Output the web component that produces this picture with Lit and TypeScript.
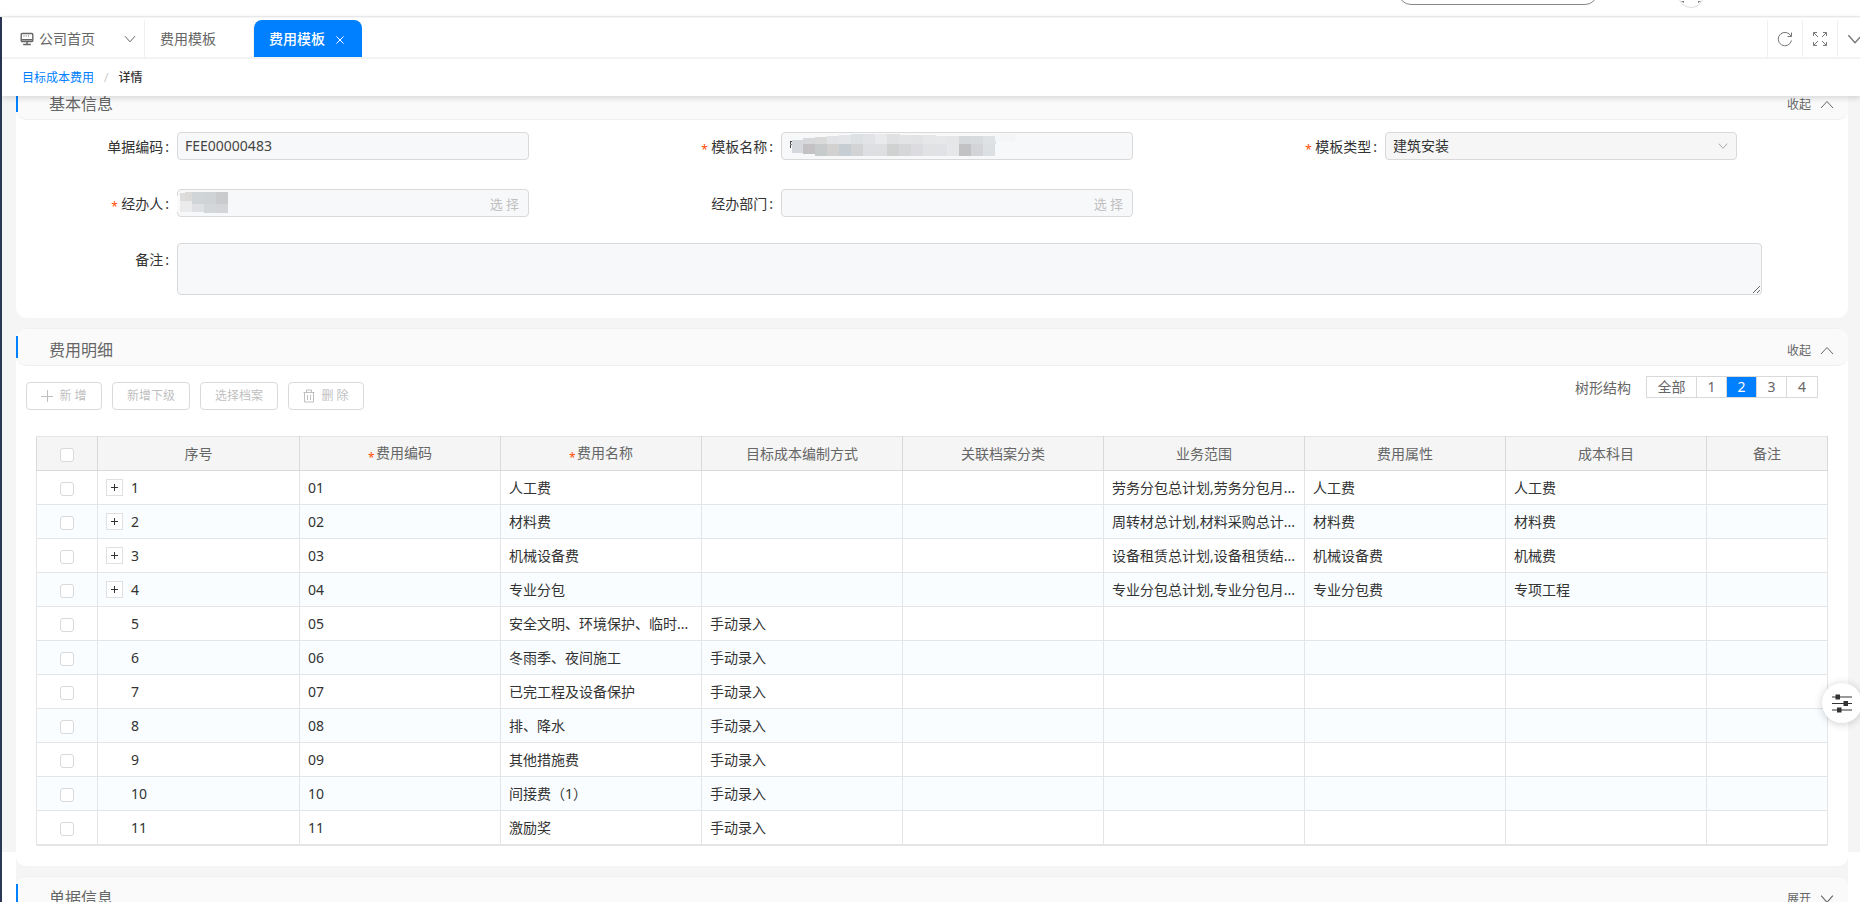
import { LitElement, html, svg, css, nothing } from "lit";
import { customElement, property, state } from "lit/decorators.js";
import { classMap } from "lit/directives/class-map.js";

const chevronDown = (size = 12) => html`<svg width=${size} height=${size} viewBox="0 0 12 12" fill="none" stroke="currentColor" stroke-width="1" aria-hidden="true"><path d="M1 3.2 6 8.8 11 3.2" /></svg>`;
const chevronUp = (size = 14) => html`<svg width=${size} height=${size} viewBox="0 0 14 14" fill="none" stroke="currentColor" stroke-width="1" aria-hidden="true"><path d="M1 10 7 3.5 13 10" /></svg>`;

interface Tile { x: number; y: number; w: number; h: number; c: string }

const personTiles: Tile[] = [
  { x: 0, y: 7, w: 3, h: 16, c: "#fafafa" },
  { x: 3, y: 4, w: 6, h: 8, c: "#dfdddc" }, { x: 8, y: 3, w: 7, h: 9, c: "#dcdad9" },
  { x: 15, y: 3, w: 12, h: 12, c: "#d0d5d7" }, { x: 27, y: 3, w: 12, h: 12, c: "#cfd3d5" }, { x: 39, y: 3, w: 12, h: 12, c: "#c9cbcd" },
  { x: 3, y: 12, w: 12, h: 11, c: "#ebebeb" }, { x: 15, y: 15, w: 12, h: 8, c: "#dfe0e4" },
  { x: 27, y: 15, w: 12, h: 9, c: "#d3d7da" }, { x: 39, y: 15, w: 12, h: 9, c: "#d4d5d8" },
];

const upper = ["#d6d8da", "#dadada", "#e1e3e6", "#e4e5e8", "#dee1e4", "#e1e3e6", "#e9eaec", "#e0e1e3", "#e3e4e6", "#e2e3e4", "#e6e7e9", "#e7e8ea", "#e5e6e8", "#d5d9dc", "#d8dbdd", "#dee2e5"];
const lower = ["#c3c1c3", "#c8cbcb", "#d3d1cf", "#c6cdd3", "#d2d3d5", "#dddfe2", "#dedfe1", "#d0d2d2", "#d5d7d9", "#dcdce0", "#e1e2e4", "#e1e2e5", "#e6e7e9", "#c2c1c3", "#d2d4d7", "#dde0e3"];
const topEdge = [6, 5, 4, 3, 2, 2, 2, 2, 3, 3, 3, 4, 4, 4, 4, 4];
const nameTiles: Tile[] = [
  { x: 9, y: 9, w: 1, h: 7, c: "#4a4450" }, { x: 9, y: 9, w: 3, h: 1, c: "#4a4450" }, { x: 9, y: 12, w: 3, h: 1, c: "#8a8088" },
  { x: 11, y: 8, w: 12, h: 13, c: "#d5d8dc" },
  ...upper.map((c, i) => ({ x: 22 + i * 12, y: topEdge[i], w: 13, h: 12 - topEdge[i], c })),
  ...lower.map((c, i) => ({ x: 22 + i * 12, y: 12, w: i === 15 ? 12 : 13, h: i === 0 ? 10 : 12, c })),
  { x: 178, y: 4, w: 12, h: 8, c: "#d5d9dc" },
  { x: 214, y: 3, w: 20, h: 5, c: "#f4f5f6" }, { x: 214, y: 8, w: 26, h: 1, c: "#f4f5f6" },
];

@customElement("redacted-value")
class RedactedValue extends LitElement {
  @property({ attribute: false }) tiles: Tile[] = [];
  static styles = css`
    :host { display: block; position: absolute; left: 0; top: 0; pointer-events: none; }
    svg { display: block; }
  `;
  render() {
    return html`<svg width="244" height="28" shape-rendering="crispEdges" aria-hidden="true">
      ${this.tiles.map((t) => svg`<rect x=${t.x} y=${t.y} width=${t.w} height=${t.h} fill=${t.c}></rect>`)}
    </svg>`;
  }
}

@customElement("panel-card")
class PanelCard extends LitElement {
  @property() heading = "";
  @property({ type: Boolean }) collapsed = false;
  static styles = css`
    :host { display: block; background: #fff; border-radius: 10px; color: #666; }
    .head { display: flex; align-items: flex-start; height: 36px; background: #fafafa; border-top: 1px solid #f1f1f1; border-bottom: 1px solid #efefef; border-radius: 10px; }
    .bar { width: 2px; height: 22px; margin-top: 7px; background: #0080ff; }
    h2 { flex: 1; margin: 0; padding: 9px 0 0 31px; font-size: 16px; font-weight: 400; line-height: 24px; }
    button { display: flex; align-items: center; gap: 9px; margin: 12px 14px 0 0; padding: 0; border: 0; background: none; font: inherit; font-size: 12px; line-height: 20px; color: #666; }
    svg { display: block; }
  `;
  render() {
    return html`
      <div class="head">
        <span class="bar"></span>
        <h2>${this.heading}</h2>
        <button type="button" aria-expanded=${this.collapsed ? "false" : "true"} @click=${() => (this.collapsed = !this.collapsed)}>
          ${this.collapsed ? "展开" : "收起"} ${this.collapsed ? chevronDown(14) : chevronUp(14)}
        </button>
      </div>
      ${this.collapsed ? nothing : html`<slot></slot>`}
    `;
  }
}

interface Row { no: string; code: string; name: string; mode?: string; scope?: string; attr?: string; subject?: string; parent?: boolean }

const rows: Row[] = [
  { no: "1", code: "01", name: "人工费", scope: "劳务分包总计划,劳务分包月...", attr: "人工费", subject: "人工费", parent: true },
  { no: "2", code: "02", name: "材料费", scope: "周转材总计划,材料采购总计...", attr: "材料费", subject: "材料费", parent: true },
  { no: "3", code: "03", name: "机械设备费", scope: "设备租赁总计划,设备租赁结...", attr: "机械设备费", subject: "机械费", parent: true },
  { no: "4", code: "04", name: "专业分包", scope: "专业分包总计划,专业分包月...", attr: "专业分包费", subject: "专项工程", parent: true },
  { no: "5", code: "05", name: "安全文明、环境保护、临时...", mode: "手动录入" },
  { no: "6", code: "06", name: "冬雨季、夜间施工", mode: "手动录入" },
  { no: "7", code: "07", name: "已完工程及设备保护", mode: "手动录入" },
  { no: "8", code: "08", name: "排、降水", mode: "手动录入" },
  { no: "9", code: "09", name: "其他措施费", mode: "手动录入" },
  { no: "10", code: "10", name: "间接费（1）", mode: "手动录入" },
  { no: "11", code: "11", name: "激励奖", mode: "手动录入" },
];

const columns: { title: string; required?: boolean }[] = [
  { title: "序号" }, { title: "费用编码", required: true }, { title: "费用名称", required: true },
  { title: "目标成本编制方式" }, { title: "关联档案分类" }, { title: "业务范围" },
  { title: "费用属性" }, { title: "成本科目" }, { title: "备注" },
];

@customElement("fee-table")
class FeeTable extends LitElement {
  static styles = css`
    :host { display: block; border-bottom: 1px solid #e5e5e5; }
    table { width: 100%; table-layout: fixed; border-collapse: collapse; font-size: 14px; line-height: 20px; color: #333; }
    .c-check { width: 61px; }
    .c-no { width: 202px; }
    .c-note { width: 121px; }
    th, td { height: 33px; padding: 0 8px; border: 1px solid #e5e5e5; overflow: hidden; white-space: nowrap; text-align: left; font-weight: 400; box-sizing: content-box; }
    th { background: #f5f5f5; border-color: #e5e5e5 #d9d9d9 #d9d9d9; text-align: center; color: #666; }
    tbody tr:nth-child(even) { background: #f9fdff; }
    .pick { padding: 0; text-align: center; }
    input { appearance: none; display: block; width: 14px; height: 14px; margin: 2px auto 0; border: 1px solid #d9d9d9; border-radius: 3px; background: #fff; }
    input:checked { background: #0080ff; border-color: #0080ff; }
    .star { display: inline-block; width: 8px; color: #ff4d00; font-size: 12px; line-height: 12px; vertical-align: -4px; text-align: left; }
    .tree { display: flex; align-items: center; gap: 8px; }
    .toggle, .indent { width: 17px; height: 17px; box-sizing: border-box; }
    .toggle { display: flex; align-items: center; justify-content: center; padding: 0; border: 1px solid #e0e0e0; background: #fff; color: #333; }
  `;
  render() {
    return html`<table>
      <colgroup>
        <col class="c-check" /><col class="c-no" /><col /><col /><col /><col /><col /><col /><col /><col class="c-note" />
      </colgroup>
      <thead>
        <tr>
          <th class="pick"><input type="checkbox" aria-label="全部" /></th>
          ${columns.map((c) => html`<th>${c.required ? html`<span class="star">*</span>` : nothing}${c.title}</th>`)}
        </tr>
      </thead>
      <tbody>
        ${rows.map((r) => html`<tr>
          <td class="pick"><input type="checkbox" aria-label=${r.name} /></td>
          <td><div class="tree">${r.parent
            ? html`<button class="toggle" type="button" aria-label="展开"><svg width="9" height="9" viewBox="0 0 9 9" stroke="currentColor" stroke-width="1"><path d="M1 4.5H8M4.5 1V8" /></svg></button>`
            : html`<span class="indent"></span>`}${r.no}</div></td>
          <td>${r.code}</td><td>${r.name}</td><td>${r.mode ?? nothing}</td><td></td>
          <td>${r.scope ?? nothing}</td><td>${r.attr ?? nothing}</td><td>${r.subject ?? nothing}</td><td></td>
        </tr>`)}
      </tbody>
    </table>`;
  }
}

@customElement("app-root")
class AppRoot extends LitElement {
  @state() private level = "2";

  static styles = css`
    :host { display: block; position: relative; height: 100vh; overflow: hidden; background: #fff; color: #333; font-family: "Noto Sans", "Noto Sans CJK SC", sans-serif; font-size: 14px; line-height: 20px; }
    svg { display: block; flex: none; }
    button { font: inherit; }
    .top { display: flex; justify-content: flex-end; align-items: flex-start; gap: 80px; height: 17px; padding-right: 156px; box-sizing: border-box; border-bottom: 1px solid #f0f0f0; overflow: hidden; }
    .search { width: 200px; height: 30px; margin-top: -25px; box-sizing: border-box; border: 1px solid #888; border-radius: 13px; background: #fff; }
    .avatar { width: 26px; height: 26px; margin-top: -18px; box-sizing: border-box; }
    .frame { border-left: 2px solid #2b3855; height: calc(100vh - 17px); }
    .sticky { position: relative; z-index: 2; background: #fff; box-shadow: 0 2px 6px rgba(0, 0, 0, 0.15); }
    .tabs { display: flex; height: 37px; padding-top: 2px; border-top: 1px solid #f5f5f5; border-bottom: 2px solid #f3f3f3; color: #666; }
    .tab { display: flex; align-items: center; box-sizing: border-box; padding: 0; border: 0; background: none; color: #666; }
    .home { width: 143px; gap: 5px; padding: 0 8px 0 18px; border-right: 1px solid #f0f0f0; }
    .home span { flex: 1; text-align: left; }
    .plain { width: 109px; padding-left: 15px; border-right: 1px solid #f3f3f3; }
    .active { width: 108px; padding-left: 15px; gap: 11px; background: #0080ff; color: #fff; font-weight: 500; border-radius: 8px 8px 0 0; }
    .active svg { margin-top: 2px; }
    .tools { display: flex; margin-left: auto; margin-right: -12px; }
    .tool { display: flex; align-items: center; justify-content: center; width: 35px; padding: 0; border: 0; border-left: 1px solid #f0f0f0; background: none; color: #777; }
    .crumbs { display: flex; align-items: center; gap: 10px; height: 37px; padding-left: 20px; font-size: 12px; }
    .crumbs a { color: #0080ff; text-decoration: none; }
    .crumbs i { color: #ccc; font-style: normal; }
    .crumbs strong { font-weight: 500; }
    .view { display: flow-root; height: calc(100vh - 146px); padding: 0 12px 0 14px; box-sizing: border-box; background: #f5f5f5; }
    .stack { display: flex; flex-direction: column; gap: 10px; margin-top: -14px; background: #f5f5f5; }
    .form { padding: 12px 10px 23px; }
    .fields { display: grid; grid-template-columns: repeat(3, 1fr); row-gap: 29px; }
    .field { display: grid; grid-template-columns: 25% 58.3%; }
    .remark { display: grid; grid-template-columns: 8.333% 87.5%; margin-top: 26px; }
    label { display: flex; justify-content: flex-end; align-items: center; height: 30px; margin-bottom: -2px; padding-right: 8px; color: #333; }
    .remark label { height: 34px; }
    label::after { content: ":"; margin-left: 2px; }
    .star { width: 10px; color: #ff4d00; font-size: 12px; line-height: 12px; padding-top: 6px; }
    .control { position: relative; display: flex; height: 28px; }
    .control input, .control select, textarea { width: 100%; box-sizing: border-box; border: 1px solid #d9d9d9; border-radius: 4px; background: #f7f8fa; font: inherit; color: #444; opacity: 1; margin: 0; padding: 0 7px; }
    .control input { padding-bottom: 1px; }
    .control select { appearance: none; background: #f6f6f6; color: #333; }
    .control .arrow { position: absolute; right: 9px; top: 9px; color: #999; }
    .choose { position: absolute; right: 10px; top: 4px; padding: 0; border: 0; background: none; font-size: 13px; line-height: 22px; color: #bfbfbf; }
    textarea { display: block; height: 52px; resize: vertical; }
    .bar { display: flex; justify-content: space-between; align-items: flex-start; height: 60px; padding: 10px 30px 0 10px; }
    .actions { display: flex; gap: 10px; padding-top: 6px; }
    .act { display: flex; align-items: center; justify-content: center; gap: 6px; min-width: 76px; height: 28px; padding: 0 14px; border: 1px solid #d9d9d9; border-radius: 4px; background: #fff; font-size: 12px; color: #bfbfbf; }
    .levels { display: flex; align-items: center; color: #666; }
    .levels > span { margin: 2px 15px 0 0; }
    .seg { display: flex; border: 1px solid #d9d9d9; }
    .seg button { width: 30px; height: 20px; padding: 0; border: 0; border-right: 1px solid #d9d9d9; background: #fff; line-height: 20px; color: #666; }
    .seg button:first-child { width: 50px; }
    .seg button:last-child { border-right: 0; }
    .seg button.on { background: #0080ff; color: #fff; }
    .table { padding: 0 20px 20px; }
    .float { position: absolute; z-index: 3; right: -2px; bottom: 179px; width: 40px; height: 40px; padding: 0; border: 0; border-radius: 50%; background: #fff; box-shadow: 0 1px 8px rgba(0, 0, 0, 0.2); display: flex; align-items: center; justify-content: center; color: #333; }
  `;

  private field(id: string, text: string, control: unknown, required = false) {
    return html`<div class="field">
      <label for=${id}>${required ? html`<span class="star">*</span>` : nothing}${text}</label>
      <div class="control">${control}</div>
    </div>`;
  }

  render() {
    return html`
      <header class="top">
        <div class="search"></div>
        <svg class="avatar" viewBox="0 0 26 26"><circle cx="13" cy="13" r="12.5" fill="#fff" stroke="#ddd" /><path d="M3 19h3v2zM23 19h-3v2z" fill="#777" /></svg>
      </header>
      <div class="frame">
        <div class="sticky">
          <nav class="tabs">
            <button class="tab home" type="button">
              <svg width="14" height="14" viewBox="0 0 14 14" fill="none" stroke="currentColor"><rect x="1.200" y="1.500" width="11.600" height="8" rx="1" stroke-width="1.400" /><path d="M3.500 4h1M5.800 4h1M8 4h1" stroke-width="1" /><path d="M1.500 7.700h11M7 9.500v2.500M3.200 12.500h7.600" stroke-width="1.400" /></svg>
              <span>公司首页</span>${chevronDown(12)}
            </button>
            <button class="tab plain" type="button">费用模板</button>
            <button class="tab active" type="button">费用模板<svg width="8" height="8" viewBox="0 0 8 8" stroke="currentColor" stroke-width="1"><path d="M.5.5l7 7M7.5.5l-7 7" /></svg></button>
            <div class="tools">
              <button class="tool" type="button" aria-label="刷新"><svg width="16" height="16" viewBox="0 0 16 16" fill="none" stroke="currentColor"><path d="M14 5.200A6.700 6.700 0 1 0 14.500 9.500" /><path d="M14.500 1.500v4H10.500" /></svg></button>
              <button class="tool" type="button" aria-label="全屏"><svg width="16" height="16" viewBox="0 0 16 16" fill="none" stroke="currentColor"><path d="M1.500 5V1.500H5M11 1.500h3.500V5M14.500 11v3.500H11M5 14.500H1.500V11M2 2l4 4M14 2l-4 4M14 14l-4-4M2 14l4-4" /></svg></button>
              <button class="tool" type="button" aria-label="更多">${chevronDown(16)}</button>
            </div>
          </nav>
          <nav class="crumbs"><a href="#">目标成本费用</a><i>/</i><strong>详情</strong></nav>
        </div>
        <main class="view">
          <div class="stack">
            <panel-card heading="基本信息">
              <div class="form">
                <div class="fields">
                  ${this.field("code", "单据编码", html`<input id="code" value="FEE00000483" disabled />`)}
                  ${this.field("name", "模板名称", html`<input id="name" disabled /><redacted-value .tiles=${nameTiles}></redacted-value>`, true)}
                  ${this.field("type", "模板类型", html`<select id="type" disabled><option>建筑安装</option></select><span class="arrow">${chevronDown(10)}</span>`, true)}
                  ${this.field("person", "经办人", html`<input id="person" disabled /><redacted-value .tiles=${personTiles}></redacted-value><button class="choose" type="button" disabled>选 择</button>`, true)}
                  ${this.field("dept", "经办部门", html`<input id="dept" disabled /><button class="choose" type="button" disabled>选 择</button>`)}
                </div>
                <div class="remark"><label for="remark">备注</label><textarea id="remark" disabled></textarea></div>
              </div>
            </panel-card>
            <panel-card heading="费用明细">
              <div class="bar">
                <div class="actions">
                  <button class="act" type="button" disabled><svg width="12" height="12" viewBox="0 0 12 12" stroke="currentColor"><path d="M0 6.500H12M6.500 0V12" /></svg>新 增</button>
                  <button class="act" type="button" disabled>新增下级</button>
                  <button class="act" type="button" disabled>选择档案</button>
                  <button class="act" type="button" disabled><svg width="12" height="14" viewBox="0 0 12 14" fill="none" stroke="currentColor"><path d="M.5 3.500H11.500M3.500 3.500V1H8.500V3.500M1.500 3.500V13H10.500V3.500M4.500 6V11M7.500 6V11" /></svg>删 除</button>
                </div>
                <div class="levels">
                  <span>树形结构</span>
                  <div class="seg">
                    ${["全部", "1", "2", "3", "4"].map((v) => html`<button type="button" class=${classMap({ on: this.level === v })} @click=${() => (this.level = v)}>${v}</button>`)}
                  </div>
                </div>
              </div>
              <div class="table"><fee-table></fee-table></div>
            </panel-card>
            <panel-card heading="单据信息" collapsed></panel-card>
          </div>
        </main>
      </div>
      <button class="float" type="button" aria-label="设置"><svg width="20" height="20" viewBox="0 0 20 20" fill="currentColor"><path d="M0 3.500h20v1H0zM0 10h20v1H0zM0 16.500h20v1H0z" /><path d="M3.500 1.500h4.500v5H3.500zM11.500 8h4.500v5H11.500zM5 14.500h4.500v5H5z" /></svg></button>
    `;
  }
}
